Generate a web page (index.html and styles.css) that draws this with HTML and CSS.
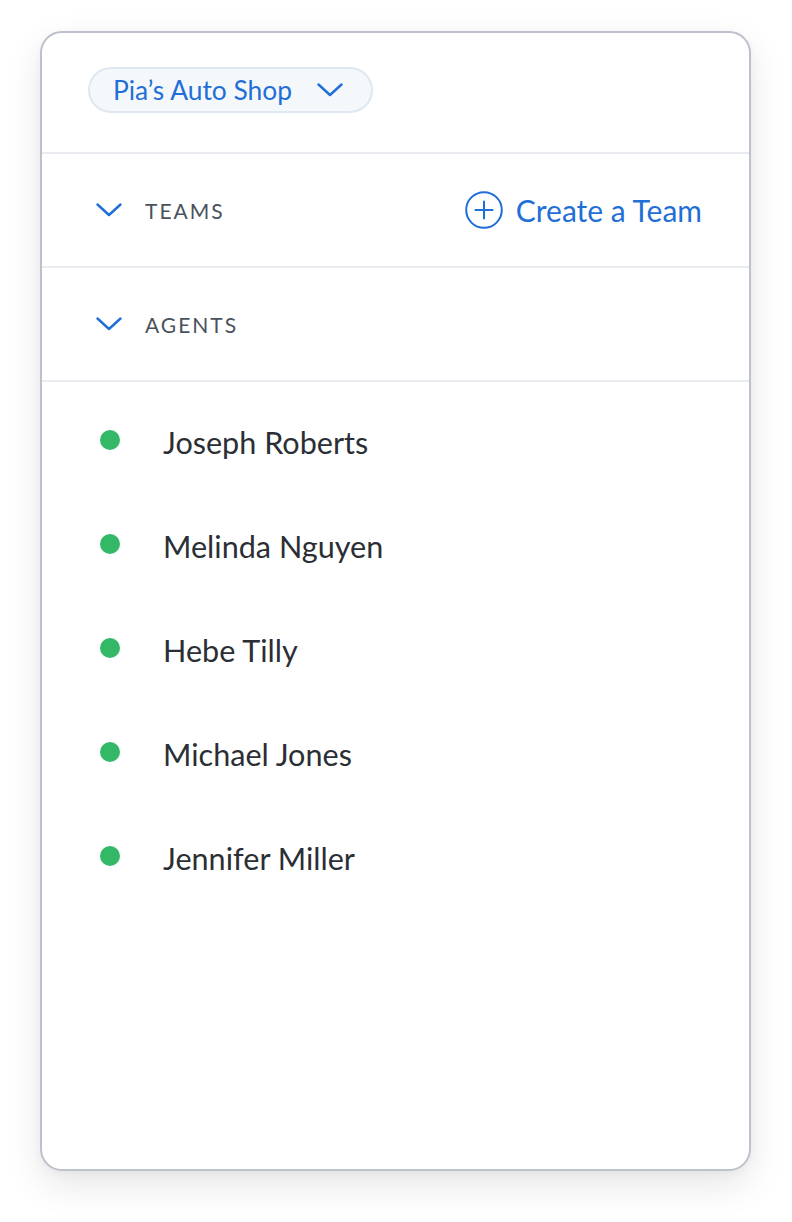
FILE: index.html
```html
<!DOCTYPE html>
<html>
<head>
<meta charset="utf-8">
<link rel="stylesheet" href="styles.css">
</head>
<body>
<div class="card">
  <div class="header">
    <button class="pill">
      <span class="pill-text">Pia’s Auto Shop</span>
      <svg class="chev" width="26" height="14" viewBox="0 0 26 14"><path d="M1.5 1.5 L13 12 L24.5 1.5" fill="none" stroke="#1f6fd6" stroke-width="2.4" stroke-linecap="round" stroke-linejoin="round"/></svg>
    </button>
  </div>
  <div class="section">
    <div class="sec-left">
      <svg class="chev" width="26" height="14" viewBox="0 0 26 14"><path d="M1.5 1.5 L13 12 L24.5 1.5" fill="none" stroke="#1f6fd6" stroke-width="2.4" stroke-linecap="round" stroke-linejoin="round"/></svg>
      <span class="sec-title">TEAMS</span>
    </div>
    <a class="create">
      <svg width="38" height="38" viewBox="0 0 38 38"><circle cx="19" cy="19" r="17.8" fill="none" stroke="#1f6fd6" stroke-width="2"/><path d="M19 10.5 V27.5 M10.5 19 H27.5" stroke="#1f6fd6" stroke-width="2" stroke-linecap="round"/></svg>
      <span>Create a Team</span>
    </a>
  </div>
  <div class="section">
    <div class="sec-left">
      <svg class="chev" width="26" height="14" viewBox="0 0 26 14"><path d="M1.5 1.5 L13 12 L24.5 1.5" fill="none" stroke="#1f6fd6" stroke-width="2.4" stroke-linecap="round" stroke-linejoin="round"/></svg>
      <span class="sec-title">AGENTS</span>
    </div>
  </div>
  <ul class="agents">
    <li><span class="dot"></span><span class="name">Joseph Roberts</span></li>
    <li><span class="dot"></span><span class="name">Melinda Nguyen</span></li>
    <li><span class="dot"></span><span class="name">Hebe Tilly</span></li>
    <li><span class="dot"></span><span class="name">Michael Jones</span></li>
    <li><span class="dot"></span><span class="name">Jennifer Miller</span></li>
  </ul>
</div>
</body>
</html>
```

FILE: styles.css
```css
* { box-sizing: border-box; }
html, body { margin: 0; background: #ffffff; }
body {
  padding: 31px 0 51px 40px;
  font-family: "Lato", "Noto Sans", sans-serif;
}
.card {
  width: 711px;
  height: 1140px;
  border: 2px solid #bcc1cb;
  border-radius: 22px;
  background: #fff;
  box-shadow: 0 14px 36px rgba(0,0,0,0.10), 0 2px 8px rgba(0,0,0,0.04);
  overflow: hidden;
}
.header {
  height: 121px;
  padding: 34px 0 0 46px;
  border-bottom: 2px solid #e8ebef;
}
.pill {
  display: flex;
  align-items: center;
  height: 46px;
  width: 285px;
  padding: 0 28px 0 23px;
  border: 2px solid #dfe7f1;
  border-radius: 23px;
  background: #f5f8fb;
  font-family: inherit;
  cursor: pointer;
}
.pill-text {
  font-size: 26.4px;
  color: #1f6fd6;
  flex: 1;
  text-align: left;
}
.chev { display: block; flex: none; }
.section {
  height: 114px;
  border-bottom: 2px solid #e8ebef;
  display: flex;
  align-items: center;
  justify-content: space-between;
  padding: 0 47px 0 54px;
}
.sec-left {
  display: flex;
  align-items: center;
  gap: 23px;
}
.sec-title {
  font-size: 21px;
  letter-spacing: 2px;
  color: #4a525c;
}
.create {
  display: flex;
  align-items: center;
  gap: 13px;
  color: #1f6fd6;
  font-size: 30px;
  cursor: pointer;
}
.agents {
  list-style: none;
  margin: 0;
  padding: 6px 0 0 58px;
}
.agents li {
  height: 104px;
  display: flex;
  align-items: center;
}
.dot {
  width: 20px;
  height: 20px;
  border-radius: 50%;
  background: #32b866;
  flex: none;
}
.name {
  margin-left: 43px;
  padding-top: 4px;
  font-size: 30.6px;
  color: #2b2f35;
}
```
